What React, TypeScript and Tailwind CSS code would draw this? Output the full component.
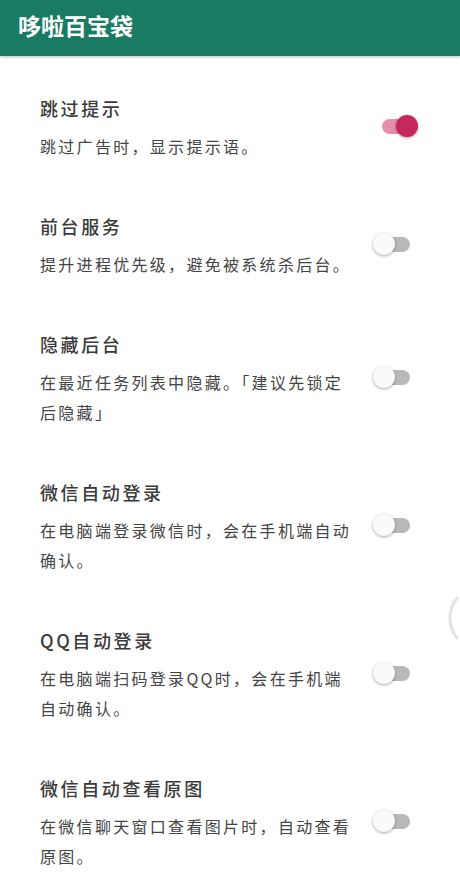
import { useState } from "react";

interface settingItem {
  title: string;
  desc: string;
  on: boolean;
}

const items: settingItem[] = [
  { title: "跳过提示", desc: "跳过广告时，显示提示语。", on: true },
  { title: "前台服务", desc: "提升进程优先级，避免被系统杀后台。", on: false },
  { title: "隐藏后台", desc: "在最近任务列表中隐藏。「建议先锁定后隐藏」", on: false },
  { title: "微信自动登录", desc: "在电脑端登录微信时，会在手机端自动确认。", on: false },
  { title: "QQ自动登录", desc: "在电脑端扫码登录QQ时，会在手机端自动确认。", on: false },
  { title: "微信自动查看原图", desc: "在微信聊天窗口查看图片时，自动查看原图。", on: false },
];

const Toggle: React.FC<{ on: boolean; onClick: () => void }> = ({ on, onClick }) => {
  return (
    <button
      type="button"
      onClick={onClick}
      className="relative w-[46px] h-[24px] shrink-0 flex items-center justify-center"
    >
      <span
        className={
          on
            ? "w-[28px] h-[15px] rounded-full bg-[#e68fab]"
            : "w-[28px] h-[15px] rounded-full bg-[#b9b9b9]"
        }
      />
      <span
        className={
          on
            ? "absolute top-[1px] left-[23px] w-[22px] h-[22px] rounded-full bg-[#c4285c] shadow-[0_1px_3px_rgba(0,0,0,0.35)]"
            : "absolute top-[1px] left-[0px] w-[22px] h-[22px] rounded-full bg-[#fafafa] shadow-[0_1px_3px_rgba(0,0,0,0.35)]"
        }
      />
    </button>
  );
};

export default function App() {
  const [states, setStates] = useState(items.map((i) => i.on));

  const flip = (index: number) => {
    setStates(states.map((s, i) => (i === index ? !s : s)));
  };

  return (
    <div className="relative w-full h-[884px] overflow-hidden bg-white font-['Noto_Sans_CJK_SC','Noto_Sans',sans-serif]">
      {/* Toolbar */}
      <div className="h-14 bg-[#1a7b63] flex items-center px-[18px] pb-[6px] shadow-[0_1px_3px_rgba(0,0,0,0.25)] relative z-10">
        <h1 className="text-[23px] font-bold text-white leading-none">哆啦百宝袋</h1>
      </div>

      {/* Settings list */}
      <div className="flex flex-col">
        {items.map((item, index) => (
          <div key={index} className="flex items-center pl-10 pt-10 pb-[13px]">
            <div className="w-[320px] flex flex-col">
              <p className="text-[18px] leading-[24px] font-medium tracking-[2.6px] text-[#3a3a3a]">
                {item.title}
              </p>
              <p className="mt-[11px] text-[16px] leading-[30px] tracking-[2.3px] text-[#444444]">
                {item.desc}
              </p>
            </div>
            <div className="ml-[13px] -mt-[5px]">
              <Toggle on={states[index]} onClick={() => flip(index)} />
            </div>
          </div>
        ))}
      </div>

      {/* edge handle */}
      <svg
        className="absolute left-[446px] top-[596px]"
        width="14"
        height="44"
        viewBox="0 0 14 44"
      >
        <path
          d="M11 2 A32 32 0 0 0 11 42"
          fill="none"
          stroke="#e3e3e3"
          strokeWidth="3"
          strokeLinecap="round"
        />
      </svg>
    </div>
  );
}
